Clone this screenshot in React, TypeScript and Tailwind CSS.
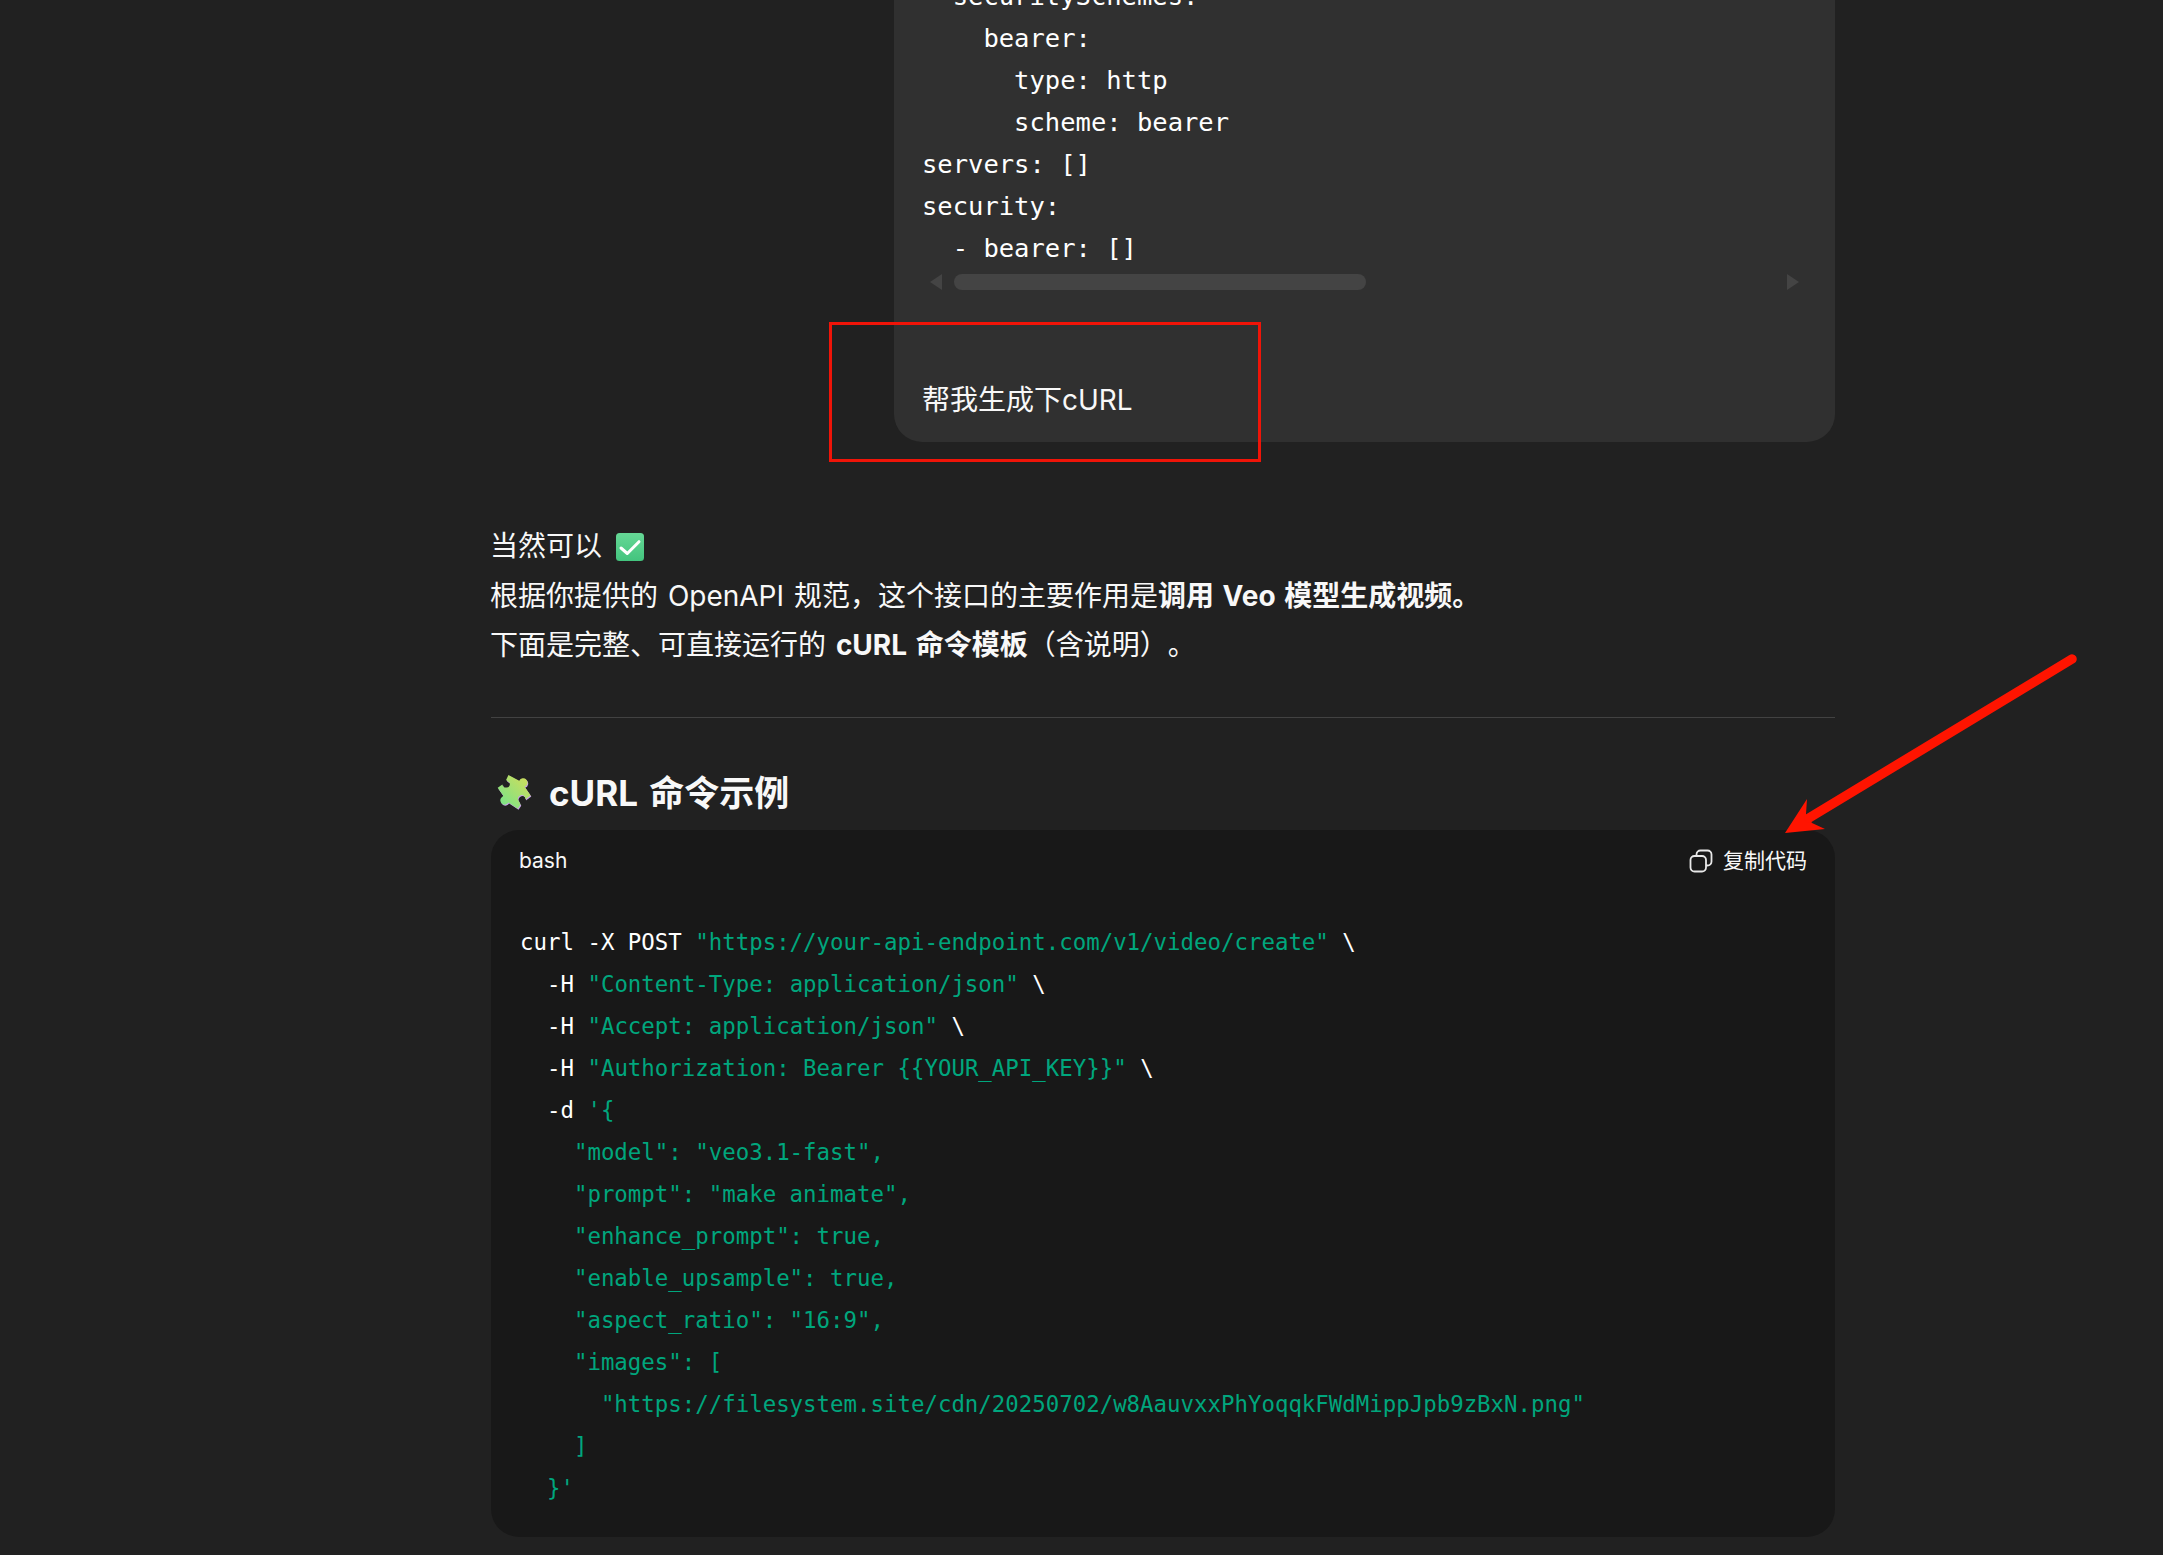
const mono = "font-['DejaVu_Sans_Mono',monospace]";

const topLines = ["  securitySchemes:", "    bearer:", "      type: http", "      scheme: bearer", "servers: []", "security:", "  - bearer: []"];

function CheckEmoji() {
  return (
    <svg viewBox="0 0 28 28" className="ml-[14px] inline-block h-[28px] w-[28px] align-[-5px]">
      <defs>
        <linearGradient id="chk" x1="0" y1="0" x2="0" y2="1">
          <stop offset="0" stopColor="#66d896" />
          <stop offset="1" stopColor="#43c47e" />
        </linearGradient>
      </defs>
      <rect width="28" height="28" rx="3.5" fill="url(#chk)" />
      <path d="M5 15 L11.3 20.5 L23 8.7" fill="none" stroke="#fff" strokeWidth="3" strokeLinecap="round" strokeLinejoin="round" />
    </svg>
  );
}

function PuzzleEmoji() {
  const d = "M72 30 L104 47 A13 13 0 1 1 120 65 L138 91 L122 103 A11 11 0 1 0 103 108 L108 118 L100 130 L72 112 A12 12 0 1 1 50 98 L57 92 L40 68 L54 58 A11 11 0 1 0 76 54 L65 45 Z";
  return (
    <svg viewBox="38 30 104 104" className="h-[35px] w-[35px] shrink-0">
      <defs>
        <linearGradient id="pz" x1="0" y1="1" x2="1" y2="0">
          <stop offset="0" stopColor="#6fe58c" />
          <stop offset="1" stopColor="#d8dc58" />
        </linearGradient>
      </defs>
      <path d={d} fill="#c8a2e6" transform="translate(2 3)" />
      <path d={d} fill="url(#pz)" />
    </svg>
  );
}

const S = ({ children }: { children: React.ReactNode }) => <span className="text-[#00a67d]">{children}</span>;

export default function App() {
  return (
    <div className="relative h-[1555px] w-[2163px] overflow-hidden bg-[#212121] text-[#f8f8f8] [text-spacing-trim:space-all] font-['Inter','Noto_Sans_CJK_SC',sans-serif]">
      <div className="ml-[490px] w-[1345px]">
        <div className="ml-auto -mt-[25px] w-[941px] rounded-b-[28px] bg-[#303030] pl-[28px] pr-[28px] pb-[17px]">
          <pre className={`${mono} text-[25.5px] leading-[42px] text-white`}>{topLines.join("\n")}</pre>
          <div className="mt-[5px] flex h-[16px] items-center">
            <svg viewBox="0 0 12 16" className="ml-[8px] h-[16px] w-[12px]"><path d="M12 0 V16 L0 8 Z" fill="#444" /></svg>
            <div className="ml-[12px] h-[16px] w-[412px] rounded-full bg-[#444444]" />
            <div className="flex-1" />
            <svg viewBox="0 0 12 16" className="mr-[8px] h-[16px] w-[12px]"><path d="M0 0 V16 L12 8 Z" fill="#444" /></svg>
          </div>
          <p className="mt-[86px] text-[28px] leading-[49px]">帮我生成下cURL</p>
        </div>

        <div className="mt-[80px] text-[28px] leading-[49.5px] [word-spacing:2px]">
          <p>当然可以<CheckEmoji /></p>
          <p>根据你提供的 OpenAPI 规范，这个接口的主要作用是<b className="font-bold">调用 Veo 模型生成视频。</b></p>
          <p>下面是完整、可直接运行的 <b className="font-bold">cURL 命令模板</b>（含说明）。</p>
        </div>

        <div className="ml-px mt-[46px] h-px bg-[#424242]" />

        <h3 className="mt-[49px] flex items-center gap-[17px] pl-[7px] text-[35px] font-bold leading-[52px] [word-spacing:3px]">
          <PuzzleEmoji />
          <span>cURL 命令示例</span>
        </h3>

        <div className="ml-px mt-[11px] h-[707px] rounded-[28px] bg-[#181818]">
          <div className="flex h-[63px] items-center justify-between pl-[28px] pr-[28px] text-[21px]">
            <span>bash</span>
            <span className="flex items-center gap-[10px]">
              <svg viewBox="0 0 24 24" className="h-[24px] w-[24px]" fill="none" stroke="#e8e8e8" strokeWidth="1.8">
                <rect x="1.5" y="7" width="15.5" height="15.5" rx="4" />
                <path d="M7.5 7 V5.5 A4 4 0 0 1 11.5 1.5 H18.5 A4 4 0 0 1 22.5 5.5 V12.5 A4 4 0 0 1 18.5 16.5 H17" />
              </svg>
              复制代码
            </span>
          </div>
          <pre className={`${mono} mt-[28px] pl-[29px] text-[22.4px] leading-[42px] text-white`}>
            curl -X POST <S>"https://your-api-endpoint.com/v1/video/create"</S> {"\\"}{"\n"}
            {"  "}-H <S>"Content-Type: application/json"</S> {"\\"}{"\n"}
            {"  "}-H <S>"Accept: application/json"</S> {"\\"}{"\n"}
            {"  "}-H <S>"Authorization: Bearer {"{{YOUR_API_KEY}}"}"</S> {"\\"}{"\n"}
            {"  "}-d <S>{"'{"}{"\n"}
            {"    "}"model": "veo3.1-fast",{"\n"}
            {"    "}"prompt": "make animate",{"\n"}
            {"    "}"enhance_prompt": true,{"\n"}
            {"    "}"enable_upsample": true,{"\n"}
            {"    "}"aspect_ratio": "16:9",{"\n"}
            {"    "}"images": [{"\n"}
            {"      "}"https://filesystem.site/cdn/20250702/w8AauvxxPhYoqqkFWdMippJpb9zBxN.png"{"\n"}
            {"    "}]{"\n"}
            {"  "}{"}'"}</S>
          </pre>
        </div>
      </div>

      <div className="absolute left-[829px] top-[322px] h-[140px] w-[432px] border-[3px] border-[#f01408]" />
      <svg className="pointer-events-none absolute left-0 top-0 h-[1555px] w-[2163px]" viewBox="0 0 2163 1555" fill="none">
        <path d="M1785 833 L1807 799 L1806 814 L1812 823 L1825 829 Z" fill="#ff1400" />
        <path d="M2072 659 L1809 818" stroke="#ff1400" strokeWidth="9.5" strokeLinecap="round" />
      </svg>
    </div>
  );
}
